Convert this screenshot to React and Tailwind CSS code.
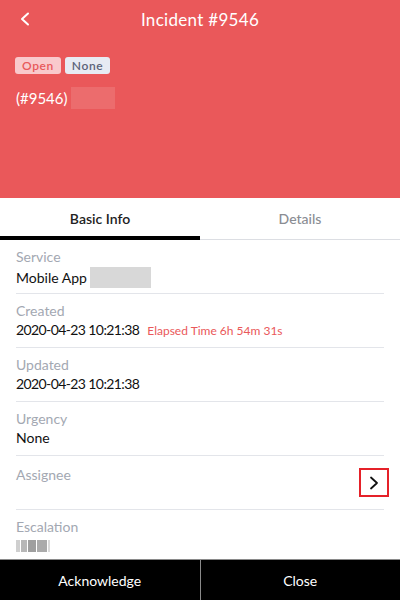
function Row(props) {
    const { label, children, last } = props;
    return (
        <div className={"mx-4 pt-[8px] " + (last ? "h-[49px]" : "h-[54px] border-b border-[#e3e5ea]")}>
            <div className="text-[14px] leading-[18px] text-[#a3a8b2]">{label}</div>
            <div className="text-[14px] leading-[20px] text-[#111]">{children}</div>
        </div>
    );
}

export default function App() {
    return (
        <div className="w-[400px] h-[600px] bg-white flex flex-col overflow-hidden" style={{ fontFamily: 'Lato, "Noto Sans", sans-serif' }}>
            {/* Header */}
            <div className="h-[198px] bg-[#ea585a] text-white shrink-0">
                <div className="relative h-[38px] flex items-center justify-center">
                    <svg className="absolute left-[19px] top-[12px]" width="12" height="14" viewBox="0 0 12 14" fill="none">
                        <path d="M9 1.5 L3 7 L9 12.5" stroke="white" strokeWidth="2" strokeLinecap="round" strokeLinejoin="round" />
                    </svg>
                    <span className="text-[17px] leading-none tracking-[0.3px]">Incident #9546</span>
                </div>
                <div className="flex gap-[4px] pl-[15px] mt-[19px]">
                    <span className="h-[17px] px-[7px] rounded-[3px] bg-[#f9c9cc] text-[#e8585a] text-[12px] leading-[17px] font-semibold tracking-[0.6px]">Open</span>
                    <span className="h-[17px] px-[7px] rounded-[3px] bg-[#e7ebf3] text-[#5b6479] text-[12px] leading-[17px] font-semibold tracking-[0.6px]">None</span>
                </div>
                <div className="flex items-center pl-[16px] mt-[13px]">
                    <span className="text-[15px] leading-[22px]">(#9546)</span>
                    <span className="ml-[3px] w-[44px] h-[22px] bg-[#ec6c6d]"></span>
                </div>
            </div>

            {/* Tabs */}
            <div className="h-[42px] flex shrink-0 border-b border-[#dcdee3]">
                <div className="flex-1 flex items-center justify-center text-[14px] font-semibold text-[#222] border-b-[4px] border-black -mb-px pt-[2px]">Basic Info</div>
                <div className="flex-1 flex items-center justify-center text-[14px] font-medium text-[#8a8d93]">Details</div>
            </div>

            {/* Rows */}
            <div className="flex-1">
                <Row label="Service">
                    <div className="flex items-center mt-[1px]">
                        <span>Mobile App</span>
                        <span className="ml-[3px] w-[61px] h-[21px] bg-[#d8d8d8]"></span>
                    </div>
                </Row>
                <Row label="Created">
                    <span className="tracking-[-0.6px]">2020-04-23 10:21:38</span>
                    <span className="ml-[8px] text-[12px] text-[#ea585a]">Elapsed Time 6h 54m 31s</span>
                </Row>
                <Row label="Updated">
                    <span className="tracking-[-0.6px]">2020-04-23 10:21:38</span>
                </Row>
                <Row label="Urgency">None</Row>
                <div className="mx-4 h-[54px] border-b border-[#e3e5ea] flex items-center justify-between">
                    <div className="self-start pt-[10px] text-[14px] leading-[18px] text-[#a3a8b2]">Assignee</div>
                    <div className="w-[30px] h-[29px] border-2 border-[#e52129] flex items-center justify-center mr-[-5px]">
                        <svg width="10" height="14" viewBox="0 0 10 14" fill="none">
                            <path d="M2 1.5 L8 7 L2 12.5" stroke="#111" strokeWidth="1.8" strokeLinecap="round" strokeLinejoin="round" />
                        </svg>
                    </div>
                </div>
                <Row label="Escalation" last>
                    <div className="flex items-center h-[20px] gap-[1px] opacity-70">
                        <span className="w-[4px] h-[12px] bg-[#bbb]"></span>
                        <span className="w-[6px] h-[12px] bg-[#999]"></span>
                        <span className="w-[8px] h-[12px] bg-[#777]"></span>
                        <span className="w-[10px] h-[12px] bg-[#888]"></span>
                        <span className="w-[2px] h-[12px] bg-[#ccc]"></span>
                    </div>
                </Row>
            </div>

            {/* Bottom bar */}
            <div className="h-[41px] shrink-0 bg-black flex border-t border-[#8a8a8a]">
                <div className="flex-1 flex items-center justify-center text-white text-[14px] border-r border-[#8a8a8a]">Acknowledge</div>
                <div className="flex-1 flex items-center justify-center text-white text-[14px]">Close</div>
            </div>
        </div>
    );
}
